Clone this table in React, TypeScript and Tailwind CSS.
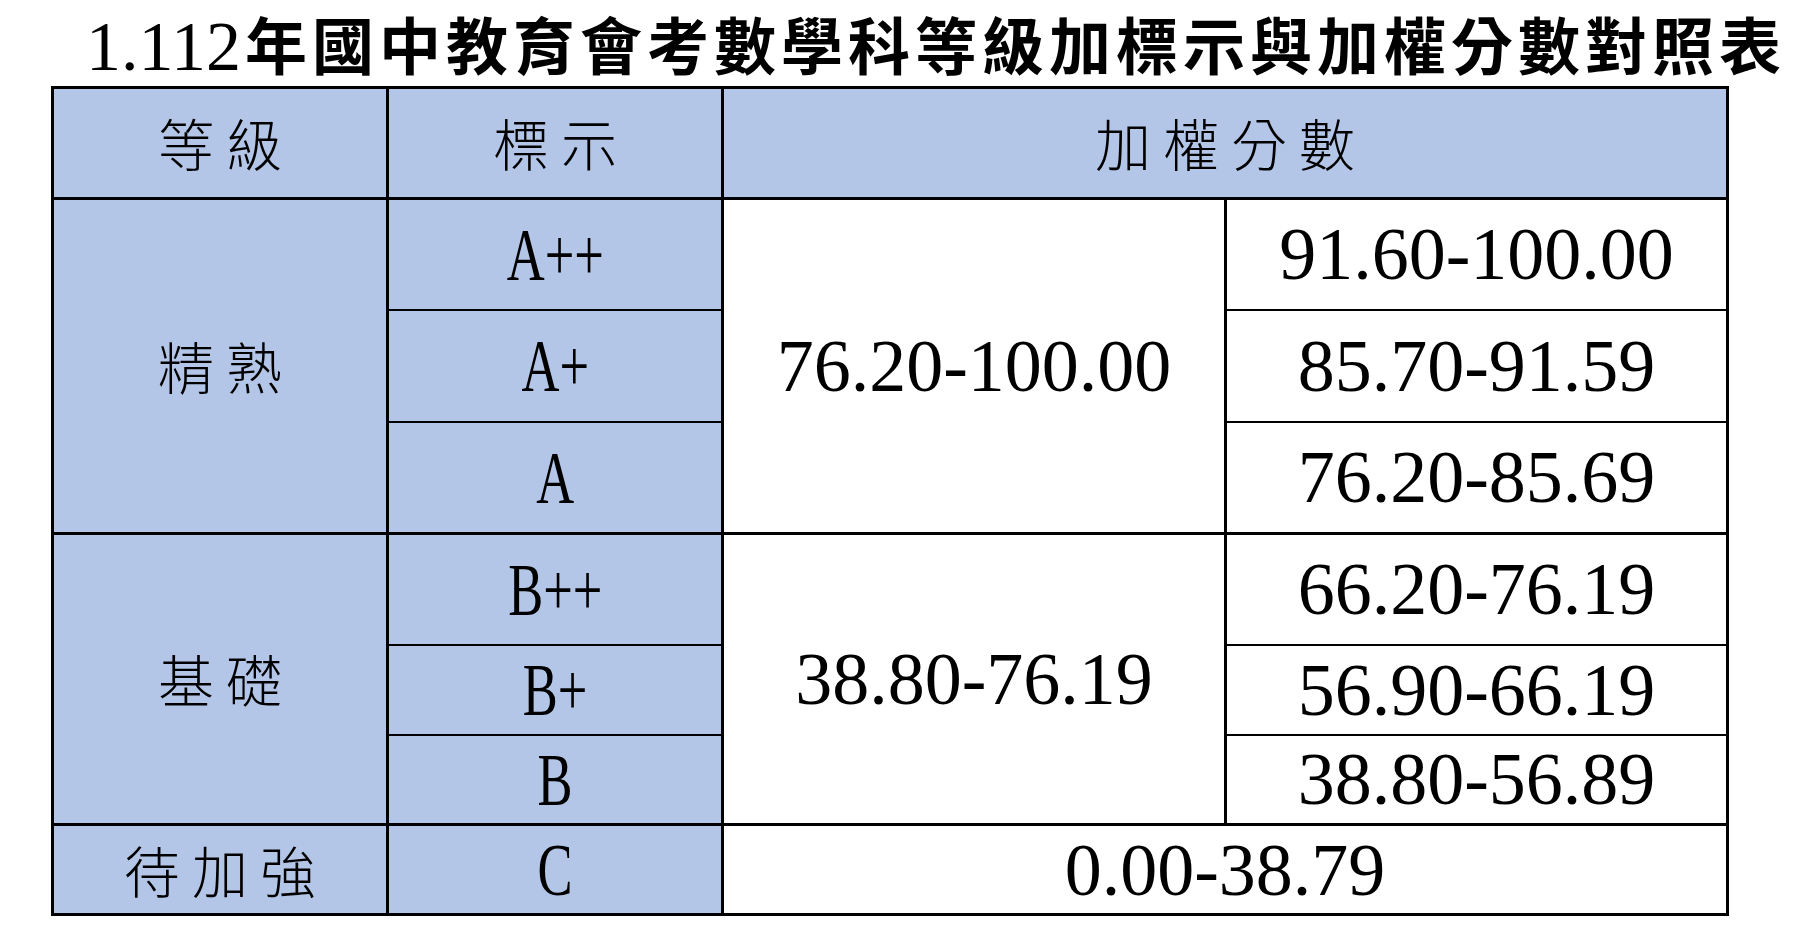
import type { ReactNode } from "react";

const blue = "bg-[#b4c6e7]";

function Han({ children }: { children: ReactNode }) {
  // CJK label in the cells: wide spacing, thin strokes
  return (
    <span className="font-['Noto_Sans_CJK_TC',sans-serif] text-[56px] font-light leading-none tracking-[12px] pl-[12px] text-black">
      {children}
    </span>
  );
}

function Num({ children }: { children: ReactNode }) {
  return (
    <span className="font-['Liberation_Serif',serif] text-[74px] leading-none text-black">
      {children}
    </span>
  );
}

function Grade({ children }: { children: ReactNode }) {
  return (
    <span className="inline-block scale-x-[0.7] font-['Liberation_Serif',serif] text-[75px] leading-none text-black">
      {children}
    </span>
  );
}

const cell = "border-[3px] border-black p-0 text-center align-middle";
// thin separators inside a group
const thinB = "border-b-2";
const thinT = "border-t-2";

export default function App() {
  return (
    <div className="w-[1812px] min-h-[944px] bg-white">
      <h1 className="h-[86px] pl-[86px] pt-[3px] text-black leading-[80px]">
        <span className="font-['Liberation_Serif',serif] text-[70px] font-normal mr-[4px]">1.112</span>
        <span className="font-['Noto_Sans_CJK_TC',sans-serif] font-bold text-[62px] tracking-[5px]">
          年國中教育會考數學科等級加標示與加權分數對照表
        </span>
      </h1>

      <table className="ml-[51px] w-[1675px] table-fixed border-collapse border-[3px] border-black">
        <colgroup>
          <col className="w-[335px]" />
          <col className="w-[335px]" />
          <col className="w-[503px]" />
          <col className="w-[502px]" />
        </colgroup>
        <tbody>
          <tr className="h-[111px]">
            <td className={`${cell} ${blue}`}><Han>等級</Han></td>
            <td className={`${cell} ${blue}`}><Han>標示</Han></td>
            <td className={`${cell} ${blue}`} colSpan={2}><Han>加權分數</Han></td>
          </tr>

          <tr className="h-[111px]">
            <td className={`${cell} ${blue}`} rowSpan={3}><Han>精熟</Han></td>
            <td className={`${cell} ${blue} ${thinB}`}><Grade>A++</Grade></td>
            <td className={cell} rowSpan={3}><Num>76.20-100.00</Num></td>
            <td className={`${cell} ${thinB}`}><Num>91.60-100.00</Num></td>
          </tr>
          <tr className="h-[112px]">
            <td className={`${cell} ${blue} ${thinT} ${thinB}`}><Grade>A+</Grade></td>
            <td className={`${cell} ${thinT} ${thinB}`}><Num>85.70-91.59</Num></td>
          </tr>
          <tr className="h-[112px]">
            <td className={`${cell} ${blue} ${thinT}`}><Grade>A</Grade></td>
            <td className={`${cell} ${thinT}`}><Num>76.20-85.69</Num></td>
          </tr>

          <tr className="h-[111px]">
            <td className={`${cell} ${blue}`} rowSpan={3}><Han>基礎</Han></td>
            <td className={`${cell} ${blue} ${thinB}`}><Grade>B++</Grade></td>
            <td className={cell} rowSpan={3}><Num>38.80-76.19</Num></td>
            <td className={`${cell} ${thinB}`}><Num>66.20-76.19</Num></td>
          </tr>
          <tr className="h-[90px]">
            <td className={`${cell} ${blue} ${thinT} ${thinB}`}><Grade>B+</Grade></td>
            <td className={`${cell} ${thinT} ${thinB}`}><Num>56.90-66.19</Num></td>
          </tr>
          <tr className="h-[90px]">
            <td className={`${cell} ${blue} ${thinT}`}><Grade>B</Grade></td>
            <td className={`${cell} ${thinT}`}><Num>38.80-56.89</Num></td>
          </tr>

          <tr className="h-[90px]">
            <td className={`${cell} ${blue}`}><Han>待加強</Han></td>
            <td className={`${cell} ${blue}`}><Grade>C</Grade></td>
            <td className={cell} colSpan={2}><Num>0.00-38.79</Num></td>
          </tr>
        </tbody>
      </table>
    </div>
  );
}
